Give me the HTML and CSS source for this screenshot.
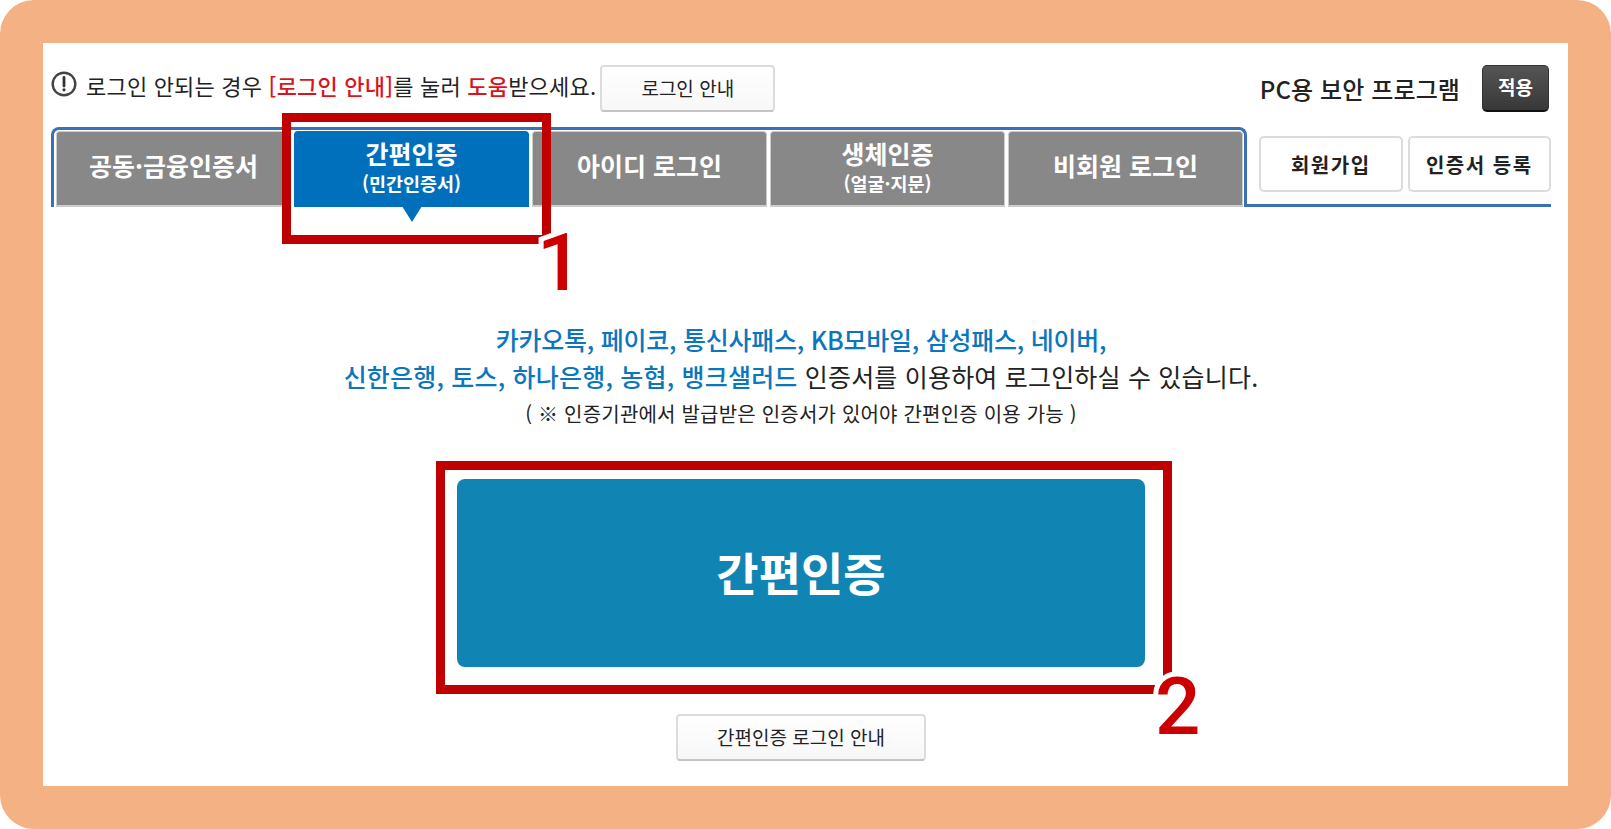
FILE: index.html
```html
<!DOCTYPE html>
<html lang="ko">
<head>
    <meta charset="UTF-8">
    <title>간편인증 로그인 안내</title>
    <link rel="stylesheet" href="styles.css">
</head>
<body>
    <div class="frame">
        <div class="content">
            <div class="topbar">
                <svg class="alert-icon" viewBox="0 0 26 26" width="26" height="26">
                    <circle cx="13" cy="13" r="11.3" fill="none" stroke="#444" stroke-width="2.4"/>
                    <path d="M13 6.5v8.5" fill="none" stroke="#333" stroke-width="2.8" stroke-linecap="round"/>
                    <circle cx="13" cy="18.8" r="1.6" fill="#333"/>
                </svg>
                <p class="notice">로그인 안되는 경우 <b class="red">[로그인 안내]</b>를 눌러 <b class="red">도움</b>받으세요.</p>
                <button class="btn btn-guide">로그인 안내</button>
                <div class="security">
                    <span class="security-label">PC용 보안 프로그램</span>
                    <button class="btn-dark">적용</button>
                </div>
            </div>

            <div class="tabrow">
                <div class="tabs">
                    <div class="tab">공동·금융인증서</div>
                    <div class="tab tab-double active">간편인증<small>(민간인증서)</small></div>
                    <div class="tab">아이디 로그인</div>
                    <div class="tab tab-double">생체인증<small>(얼굴·지문)</small></div>
                    <div class="tab">비회원 로그인</div>
                </div>
                <div class="side">
                    <button class="btn-side">회원가입</button>
                    <button class="btn-side">인증서 등록</button>
                </div>
            </div>

            <div class="message">
                <p class="blue line-one">카카오톡, 페이코, 통신사패스, KB모바일, 삼성패스, 네이버,</p>
                <p class="line-two"><span class="blue">신한은행, 토스, 하나은행, 농협, 뱅크샐러드</span> 인증서를 이용하여 로그인하실 수 있습니다.</p>
                <p class="note">( ※ 인증기관에서 발급받은 인증서가 있어야 간편인증 이용 가능 )</p>
            </div>

            <button class="btn-main">간편인증</button>
            <button class="btn btn-help">간편인증 로그인 안내</button>
        </div>

        <div class="mark mark-one"></div>
        <span class="num num-one">1</span>
        <div class="mark mark-two"></div>
        <span class="num num-two">2</span>
    </div>
</body>
</html>
```

FILE: styles.css
```css
* {
    box-sizing: border-box;
}

html, body {
    margin: 0;
    background-color: white;
}

body {
    font-family: "Noto Sans CJK KR", "Noto Sans", sans-serif;
    color: #222;
}

p {
    margin: 0;
}

button {
    font-family: inherit;
    cursor: pointer;
}

.frame {
    position: relative;
    width: 1611px;
    height: 829px;
    border: 43px solid #f4b183;
    border-radius: 34px;
    background-color: white;
    overflow: hidden;
}

.content {
    display: flex;
    flex-direction: column;
    align-items: center;
    padding: 22px 17px 0 8px;
}

/* top line */
.topbar {
    display: flex;
    align-items: center;
    width: 100%;
    height: 47px;
}

.alert-icon {
    flex: none;
    margin-top: -10px;
    margin-right: 9px;
}

.notice {
    margin-top: -8px;
    font-size: 22px;
    letter-spacing: 0.2px;
    white-space: nowrap;
}

.red {
    color: #d9141c;
    font-weight: 500;
}

.btn {
    padding: 0 0 3px;
    border: 2px solid #dcdcdc;
    border-bottom-color: #c4c4c4;
    border-radius: 4px;
    background: linear-gradient(#fff, #f7f7f7);
    color: #222;
    font-size: 19px;
}

.btn-guide {
    flex: none;
    width: 175px;
    height: 47px;
    margin-left: 4px;
}

.security {
    display: flex;
    align-items: center;
    margin-left: auto;
    margin-right: 2px;
}

.security-label {
    font-size: 24px;
    font-weight: 500;
    letter-spacing: 0.1px;
    margin-right: 22px;
}

.btn-dark {
    width: 67px;
    height: 47px;
    padding: 0 0 4px;
    border: 1px solid #333;
    border-bottom: 2px solid #111;
    border-radius: 5px;
    background: linear-gradient(#555, #383838);
    color: white;
    font-size: 19px;
    font-weight: 700;
}

/* tabs */
.tabrow {
    display: flex;
    width: 100%;
    height: 80px;
    margin-top: 15px;
}

.tabs {
    display: flex;
    gap: 3px;
    width: 1196px;
    padding: 1px 1px 0 2px;
    border: 3px solid #3a70b5;
    border-bottom: 0;
    border-radius: 8px 8px 0 0;
}

.tab {
    position: relative;
    display: flex;
    flex: 1;
    flex-direction: column;
    align-items: center;
    justify-content: center;
    padding-bottom: 8px;
    border: 1px solid #ccc;
    border-bottom: 2px solid #ccc;
    border-radius: 4px 4px 0 0;
    background-color: #888;
    color: white;
    font-size: 25px;
    font-weight: 700;
    line-height: 32px;
}

.tab small {
    margin-top: 1px;
    font-size: 18.5px;
    font-weight: 700;
    line-height: 26px;
}

.tab-double {
    padding-bottom: 5px;
}

.tab.active {
    background-color: #0070bc;
    border-color: #0070bc;
}

.tab.active::after {
    content: "";
    position: absolute;
    left: 50%;
    top: 100%;
    margin-left: -10px;
    margin-top: 1px;
    border-top: 16px solid #0070bc;
    border-left: 10px solid transparent;
    border-right: 10px solid transparent;
}

.side {
    display: flex;
    flex: 1;
    gap: 5px;
    padding: 9px 0 0 12px;
    border-bottom: 3px solid #3a70b5;
}

.btn-side {
    flex: 1;
    height: 56px;
    padding: 0;
    border: 2px solid #dcdcdc;
    border-radius: 5px;
    background-color: white;
    color: #222;
    font-size: 20px;
    font-weight: 700;
    letter-spacing: 1.5px;
    white-space: nowrap;
}

/* message */
.message {
    margin-top: 114px;
    text-align: center;
    font-size: 25px;
    line-height: 37px;
    white-space: nowrap;
}

.blue {
    color: #0c76bd;
    font-weight: 500;
}

.line-one {
    letter-spacing: -0.25px;
}

.line-two {
    letter-spacing: 0.2px;
}

.note {
    font-size: 20px;
    letter-spacing: 0.2px;
}

.btn-main {
    width: 688px;
    height: 188px;
    margin-top: 47px;
    padding: 0 0 4px;
    border: 0;
    border-radius: 8px;
    background-color: #1085b3;
    color: white;
    font-size: 46px;
    font-weight: 700;
}

.btn-help {
    width: 250px;
    height: 47px;
    margin-top: 47px;
}

/* red annotations over the page */
.mark {
    position: absolute;
    border: 9px solid #c00000;
}

.mark-one {
    left: 239px;
    top: 70px;
    width: 269px;
    height: 131px;
}

.mark-two {
    left: 393px;
    top: 418px;
    width: 736px;
    height: 233px;
}

.num {
    position: absolute;
    color: #cc0000;
    font-family: Roboto, sans-serif;
    font-size: 80px;
    font-weight: 500;
    line-height: 1;
    -webkit-text-stroke: 10px white;
    paint-order: stroke fill;
}

.num-one {
    left: 494px;
    top: 180px;
}

.num-two {
    left: 1112px;
    top: 624px;
}
```
